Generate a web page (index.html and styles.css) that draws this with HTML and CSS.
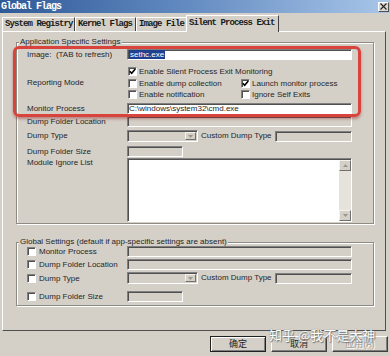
FILE: index.html
```html
<!DOCTYPE html>
<html>
<head>
<meta charset="utf-8">
<title>Global Flags</title>
<link rel="stylesheet" href="styles.css">
</head>
<body>
<div class="titlebar">
  <span class="title">Global Flags</span>
  <span class="close"><svg width="7" height="7" viewBox="0 0 7 7"><path d="M0.5 0.5L6.5 6.5M6.5 0.5L0.5 6.5" stroke="#222" stroke-width="1.1"/></svg></span>
</div>
<div class="tabs">
  <div class="tab t1">System Registry</div>
  <div class="tab t2">Kernel Flags</div>
  <div class="tab t3">Image File</div>
  <div class="tab t4 active">Silent Process Exit</div>
</div>
<div class="panel">
  <div class="group g1">
    <div class="legend">Application Specific Settings</div>
    <div class="grid1">
      <div class="lbl">Image: &nbsp;(TAB to refresh)</div>
      <div class="input white"><span class="sel">sethc.exe</span></div>

      <div></div>
      <div class="chk"><span class="cb on"><svg width="7" height="7" viewBox="0 0 7 7"><path d="M0.8 3.2L2.7 5.2L6.3 1" fill="none" stroke="#000" stroke-width="1.6"/></svg></span>Enable Silent Process Exit Monitoring</div>

      <div class="lbl lbl10">Reporting Mode</div>
      <div class="two">
        <div class="chk"><span class="cb"></span>Enable dump collection</div>
        <div class="chk"><span class="cb on"><svg width="7" height="7" viewBox="0 0 7 7"><path d="M0.8 3.2L2.7 5.2L6.3 1" fill="none" stroke="#000" stroke-width="1.6"/></svg></span>Launch monitor process</div>
      </div>

      <div></div>
      <div class="two">
        <div class="chk"><span class="cb"></span>Enable notification</div>
        <div class="chk"><span class="cb"></span>Ignore Self Exits</div>
      </div>

      <div class="lbl">Monitor Process</div>
      <div class="input white">C:\windows\system32\cmd.exe</div>

      <div class="lbl">Dump Folder Location</div>
      <div class="input"></div>

      <div class="lbl lbl12">Dump Type</div>
      <div class="combo-row">
        <div class="combo"><span class="drop"><svg width="5" height="3" viewBox="0 0 5 3"><path d="M0 0H5L2.5 3Z" fill="#9a968e"/></svg></span></div>
        <span class="lbl2">Custom Dump Type</span>
        <div class="input custom"></div>
      </div>

      <div class="lbl">Dump Folder Size</div>
      <div class="input size"></div>

      <div class="lbl lbl10">Module Ignore List</div>
      <div class="listbox">
        <div class="scroll">
          <span class="sbtn"><svg width="5" height="3" viewBox="0 0 5 3"><path d="M0 3H5L2.5 0Z" fill="#9a968e"/></svg></span>
          <span class="sbtn"><svg width="5" height="3" viewBox="0 0 5 3"><path d="M0 0H5L2.5 3Z" fill="#9a968e"/></svg></span>
        </div>
      </div>
    </div>
  </div>

  <div class="group g2">
    <div class="legend">Global Settings (default if app-specific settings are absent)</div>
    <div class="grid2">
      <div class="chk gchk"><span class="cb"></span>Monitor Process</div>
      <div class="input"></div>

      <div class="chk gchk"><span class="cb"></span>Dump Folder Location</div>
      <div class="input"></div>

      <div class="chk gchk chk12"><span class="cb"></span>Dump Type</div>
      <div class="combo-row">
        <div class="combo"><span class="drop"><svg width="5" height="3" viewBox="0 0 5 3"><path d="M0 0H5L2.5 3Z" fill="#9a968e"/></svg></span></div>
        <span class="lbl2">Custom Dump Type</span>
        <div class="input custom"></div>
      </div>

      <div class="chk gchk chk11"><span class="cb"></span>Dump Folder Size</div>
      <div class="input size"></div>
    </div>
  </div>
</div>
<div class="buttons">
  <div class="btn default">确定</div>
  <div class="btn">取消</div>
  <div class="btn disabled">应用(A)</div>
</div>
<div class="watermark">知乎 @我不是大神</div>
<div class="highlight"></div>
</body>
</html>
```
FILE: styles.css
```css
* { box-sizing: border-box; margin: 0; padding: 0; }
html, body { width: 390px; height: 356px; overflow: hidden; }
body {
  background: #d4d0c8;
  font-family: "Liberation Sans", Arial, sans-serif;
  font-size: 8px;
  color: #262626;
  position: relative;
}

.titlebar {
  height: 13px;
  background: linear-gradient(90deg, #2f5a98, #6088bf 45%, #a8c6e8);
  display: flex;
  align-items: center;
  justify-content: space-between;
  padding: 0 1px 0 1px;
}
.title {
  font: bold 10px/13px "Liberation Mono", monospace;
  letter-spacing: -1px;
  color: #fff;
}
.close {
  width: 11px;
  height: 10px;
  background: #dcd9d3;
  border: 1px solid;
  border-color: #fff #505050 #505050 #fff;
  display: flex;
  align-items: center;
  justify-content: center;
}

.tabs {
  height: 18px;
  display: flex;
  align-items: flex-end;
  padding-left: 2px;
}
.tab {
  height: 14px;
  border-top: 1px solid #fff;
  border-left: 1px solid #fff;
  border-right: 1px solid #404040;
  font: bold 9px/13px "Liberation Mono", monospace;
  letter-spacing: -0.9px;
  color: #1a1a1a;
  padding-left: 2px;
  white-space: nowrap;
  overflow: hidden;
}
.t1 { width: 73px; }
.t2 { width: 61px; }
.t3 { width: 51px; }
.tab.active {
  width: 93px;
  height: 17px;
  margin-left: -1px;
  margin-bottom: -1px;
  line-height: 15px;
  background: #d4d0c8;
  position: relative;
  z-index: 1;
}

.panel {
  height: 300px;
  margin: 0 4px 0 2px;
  border-top: 1px solid #fff;
  border-left: 1px solid #fff;
  border-right: 1px solid #505050;
  border-bottom: 1px solid #505050;
  padding-left: 13px;
}

.group {
  width: 358px;
  border: 1px solid #8e8b85;
  box-shadow: inset 1px 1px 0 #fff, 1px 1px 0 #fff;
}
.g1 { margin-top: 10px; padding-bottom: 1px; }
.g2 { margin-top: 18px; padding-bottom: 3px; }
.legend {
  width: max-content;
  margin: -6px 0 0 2px;
  padding: 0 1px;
  background: #d4d0c8;
  line-height: 9px;
}

.grid1 {
  margin-top: 3px;
  padding-left: 10px;
  display: grid;
  grid-template-columns: 100px 225px;
  grid-template-rows: 17px 12px 11px 14px 13px 14px 16px 12px 64px;
  align-items: start;
}
.grid2 {
  padding-left: 10px;
  display: grid;
  grid-template-columns: 100px 225px;
  grid-template-rows: 13px 13px 19px 11px;
  align-items: start;
}

.lbl { line-height: 11px; white-space: nowrap; }
.lbl10 { line-height: 10px; }
.lbl12 { line-height: 12px; }
.lbl2 { line-height: 12px; white-space: nowrap; }

.input {
  height: 11px;
  background: #d4d0c8;
  border: 1px solid;
  border-color: #808080 #fff #fff #808080;
  box-shadow: inset 1px 1px 0 #505050;
  padding-left: 1px;
  line-height: 9px;
  white-space: nowrap;
  overflow: hidden;
}
.input.white { background: #fff; }
.sel {
  display: inline-block;
  height: 9px;
  padding: 0 1px;
  background: #1f3f8f;
  color: #fff;
}
.input.size { width: 56px; }
.input.custom { width: 79px; margin-left: auto; }

.chk {
  display: flex;
  align-items: center;
  gap: 2px;
  height: 10px;
  white-space: nowrap;
}
.chk > .cb { margin-left: 1px; }
.gchk { height: 11px; gap: 3px; }
.gchk > .cb { margin-left: 0; }
.chk12 { height: 12px; }
.chk11 { height: 11px; }
.cb {
  width: 9px;
  height: 9px;
  flex: none;
  background: #fff;
  border: 1px solid;
  border-color: #808080 #fff #fff #808080;
  box-shadow: inset 1px 1px 0 #505050;
  display: flex;
  align-items: center;
  justify-content: center;
}
.two {
  display: grid;
  grid-template-columns: 113px 112px;
}

.combo-row {
  display: flex;
  align-items: center;
  gap: 3px;
  height: 12px;
}
.combo {
  width: 71px;
  height: 12px;
  flex: none;
  background: #d4d0c8;
  border: 1px solid;
  border-color: #808080 #fff #fff #808080;
  box-shadow: inset 1px 1px 0 #505050;
  display: flex;
  justify-content: flex-end;
  padding: 1px 1px 1px 0;
}
.drop {
  width: 11px;
  height: 8px;
  border: 1px solid;
  border-color: #f4f2ee #707070 #707070 #f4f2ee;
  display: flex;
  align-items: center;
  justify-content: center;
}

.listbox {
  width: 225px;
  height: 64px;
  background: #fff;
  border: 1px solid;
  border-color: #808080 #fff #fff #808080;
  box-shadow: inset 1px 1px 0 #505050;
  display: flex;
  justify-content: flex-end;
  padding: 1px 0 0 1px;
}
.scroll {
  width: 12px;
  background: #e6e3dd;
  display: flex;
  flex-direction: column;
  justify-content: space-between;
}
.sbtn {
  width: 12px;
  height: 11px;
  background: #d4d0c8;
  border: 1px solid;
  border-color: #f4f2ee #707070 #707070 #f4f2ee;
  display: flex;
  align-items: center;
  justify-content: center;
}

.buttons {
  margin-top: 5px;
  display: flex;
  justify-content: flex-end;
  gap: 5px;
  padding-right: 2px;
}
.btn {
  width: 56px;
  height: 16px;
  background: #d4d0c8;
  border: 1px solid;
  border-color: #fff #404040 #404040 #fff;
  box-shadow: inset -1px -1px 0 #808080;
  font: 9px/14px "Noto Sans CJK SC", sans-serif;
  text-align: center;
  color: #222;
}
.btn.default {
  border-color: #202020;
  box-shadow: inset 1px 1px 0 #fff, inset -1px -1px 0 #808080;
}
.btn.disabled {
  color: #a09c94;
  text-shadow: 1px 1px 0 #fff;
}

.watermark {
  position: absolute;
  left: 269px;
  top: 327px;
  font: 13px/16px "Noto Sans CJK SC", sans-serif;
  color: #fff;
  text-shadow: 0 0 1px #666, 1px 1px 1px #777;
  white-space: nowrap;
}

.highlight {
  position: absolute;
  left: 13px;
  top: 46px;
  width: 348px;
  height: 71px;
  border: 3px solid #d8443c;
  border-radius: 6px;
  box-shadow: 0 2px 3px rgba(150, 40, 40, 0.45);
}
```
